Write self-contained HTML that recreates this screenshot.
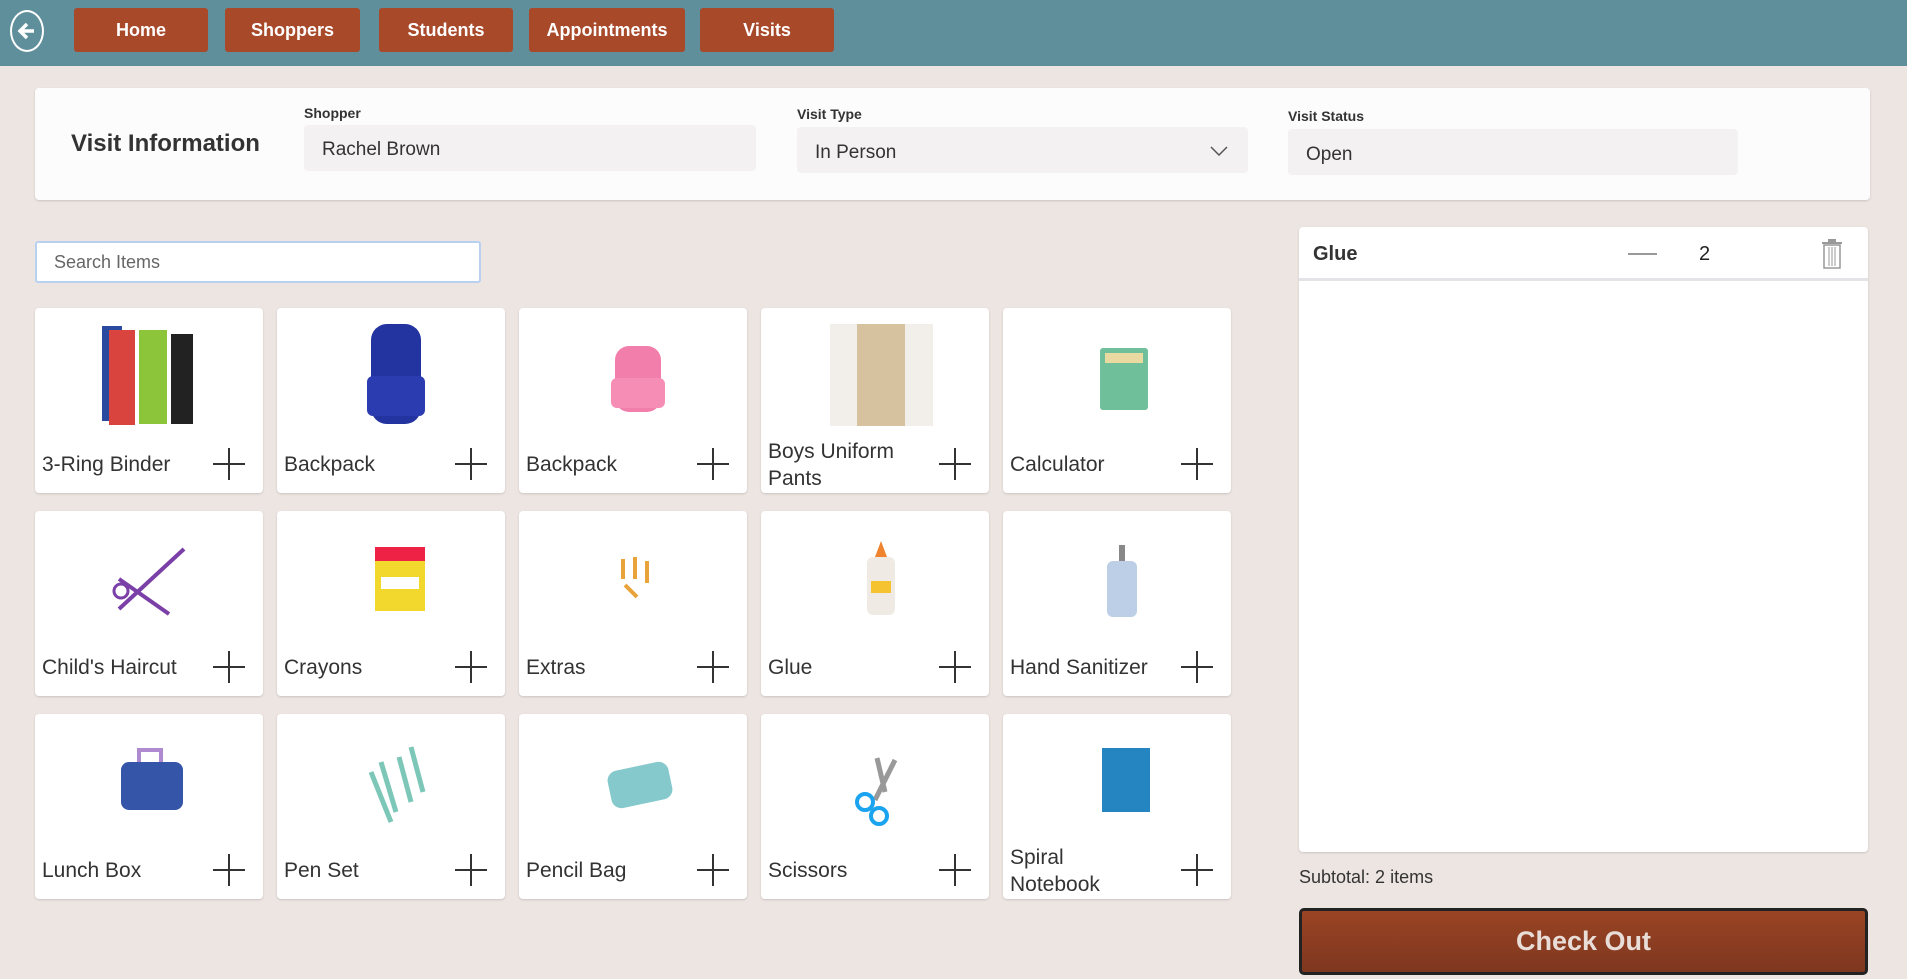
<!DOCTYPE html>
<html><head><meta charset="utf-8"><style>
*{box-sizing:border-box;margin:0;padding:0}
body{width:1907px;height:979px;overflow:hidden;background:#ede5e2;font-family:"Liberation Sans",sans-serif;color:#333;position:relative}
.top{position:absolute;left:0;top:0;width:1907px;height:66px;background:#5f8f9b}
.back{position:absolute;left:10px;top:10px;width:34px;height:42px;border:2px solid #fff;border-radius:50%}
.nav{position:absolute;top:8px;height:44px;background:#a8492a;color:#fff;font-weight:bold;font-size:18px;display:flex;align-items:center;justify-content:center;border-radius:3px}
.card0{position:absolute;left:35px;top:88px;width:1835px;height:112px;background:#fdfcfd;border-radius:4px;box-shadow:0 1px 2px rgba(0,0,0,.15)}
.lbl{position:absolute;font-size:14px;font-weight:bold;color:#333}
.inp{position:absolute;height:46px;background:#f3f1f2;border-radius:4px;font-size:19px;padding-left:18px;display:flex;align-items:center;color:#333}
.search{position:absolute;left:35px;top:241px;width:446px;height:42px;border:2px solid #b9d1f0;background:#fff;border-radius:3px;font-size:18px;color:#666;padding-left:17px;display:flex;align-items:center}
.it{position:absolute;width:228px;height:185px;background:#fff;border-radius:4px;box-shadow:0 1px 2px rgba(0,0,0,.15)}
.it .t{position:absolute;left:7px;top:0;height:185px;width:170px;display:flex;align-items:center;padding-top:128px;font-size:21px;color:#333;line-height:27px}
.it .p{position:absolute;left:178px;top:140px;width:32px;height:32px}
.it .p:before{content:"";position:absolute;left:15px;top:0;width:2px;height:32px;background:#333}
.it .p:after{content:"";position:absolute;left:0;top:15px;width:32px;height:2px;background:#333}
.it svg{position:absolute;left:64px;top:8px}
.panel{position:absolute;left:1299px;top:227px;width:569px;height:625px;background:#fff;border-radius:4px;box-shadow:0 1px 2px rgba(0,0,0,.15)}
.co{position:absolute;left:1299px;top:908px;width:569px;height:67px;background:linear-gradient(#9a4424,#7e371f);border:3px solid #222;border-radius:5px;color:#e9ddd8;font-size:27px;font-weight:bold;display:flex;align-items:center;justify-content:center}
</style></head><body>
<div class="top"></div>
<div class="back"><svg width="30" height="38" viewBox="0 0 30 38"><path d="M22 19H9M15 12L8 19L15 26" stroke="#fff" stroke-width="3.5" fill="none"/></svg></div>
<div class="nav" style="left:74px;width:134px">Home</div>
<div class="nav" style="left:225px;width:135px">Shoppers</div>
<div class="nav" style="left:379px;width:134px">Students</div>
<div class="nav" style="left:529px;width:156px">Appointments</div>
<div class="nav" style="left:700px;width:134px">Visits</div>

<div class="card0"></div>
<div style="position:absolute;left:71px;top:130px;font-size:24px;font-weight:bold;color:#333">Visit Information</div>
<div class="lbl" style="left:304px;top:105px">Shopper</div>
<div class="inp" style="left:304px;top:125px;width:452px;padding-top:4px">Rachel Brown</div>
<div class="lbl" style="left:797px;top:106px">Visit Type</div>
<div class="inp" style="left:797px;top:127px;width:451px;padding-top:6px">In Person<svg style="position:absolute;right:20px;top:19px" width="18" height="10"><path d="M1 1L9 9L17 1" stroke="#555" stroke-width="1.5" fill="none"/></svg></div>
<div class="lbl" style="left:1288px;top:108px">Visit Status</div>
<div class="inp" style="left:1288px;top:129px;width:450px;padding-top:6px">Open</div>

<div class="search">Search Items</div>

<!-- row1 -->
<div class="it" style="left:35px;top:308px"><svg width="100" height="110"><rect x="3" y="10" width="20" height="95" fill="#2a4aa0"/><rect x="10" y="14" width="26" height="95" fill="#d9443f"/><rect x="40" y="14" width="28" height="94" fill="#8cc43a"/><rect x="72" y="18" width="22" height="90" fill="#222"/></svg><div class="t">3-Ring Binder</div><div class="p"></div></div>
<div class="it" style="left:277px;top:308px"><svg width="100" height="110"><rect x="30" y="8" width="50" height="100" rx="16" fill="#23339f"/><rect x="26" y="60" width="58" height="40" rx="6" fill="#2a3cb0"/></svg><div class="t">Backpack</div><div class="p"></div></div>
<div class="it" style="left:519px;top:308px"><svg width="100" height="110"><rect x="32" y="30" width="46" height="66" rx="14" fill="#f27eab"/><rect x="28" y="62" width="54" height="30" rx="6" fill="#f58db5"/></svg><div class="t">Backpack</div><div class="p"></div></div>
<div class="it" style="left:761px;top:308px"><svg width="110" height="110" style="left:66px"><rect x="3" y="8" width="103" height="102" fill="#f2eeea"/><rect x="30" y="8" width="48" height="102" fill="#d7c2a0"/></svg><div class="t" style="padding-top:128px">Boys Uniform<br>Pants</div><div class="p"></div></div>
<div class="it" style="left:1003px;top:308px"><svg width="100" height="110"><rect x="33" y="32" width="48" height="62" rx="3" fill="#6fbf9a"/><rect x="38" y="37" width="38" height="10" fill="#ead9a0"/></svg><div class="t">Calculator</div><div class="p"></div></div>
<!-- row2 -->
<div class="it" style="left:35px;top:511px"><svg width="100" height="110"><path d="M20 90L85 30M20 60L70 95" stroke="#7b3fa8" stroke-width="4" fill="none"/><circle cx="22" cy="72" r="7" stroke="#7b3fa8" stroke-width="3" fill="none"/></svg><div class="t">Child's Haircut</div><div class="p"></div></div>
<div class="it" style="left:277px;top:511px"><svg width="100" height="110"><rect x="34" y="40" width="50" height="52" fill="#f2d72c"/><rect x="34" y="28" width="50" height="14" fill="#e24"/><rect x="40" y="58" width="38" height="12" fill="#fff"/></svg><div class="t">Crayons</div><div class="p"></div></div>
<div class="it" style="left:519px;top:511px"><svg width="100" height="110"><path d="M40 40v20M52 38v22M64 42v22M42 66l12 12" stroke="#e9a33a" stroke-width="4" fill="none"/></svg><div class="t">Extras</div><div class="p"></div></div>
<div class="it" style="left:761px;top:511px"><svg width="100" height="110"><rect x="42" y="38" width="28" height="58" rx="6" fill="#efebe4"/><path d="M50 38L56 22L62 38Z" fill="#f0832e"/><rect x="46" y="62" width="20" height="12" fill="#f4c32f"/></svg><div class="t">Glue</div><div class="p"></div></div>
<div class="it" style="left:1003px;top:511px"><svg width="100" height="110"><rect x="40" y="42" width="30" height="56" rx="6" fill="#bccfe6"/><rect x="52" y="26" width="6" height="16" fill="#888"/></svg><div class="t">Hand Sanitizer</div><div class="p"></div></div>
<!-- row3 -->
<div class="it" style="left:35px;top:714px"><svg width="100" height="110"><rect x="22" y="40" width="62" height="48" rx="8" fill="#3556a8"/><path d="M40 40V28h22v12" stroke="#b08ad0" stroke-width="4" fill="none"/></svg><div class="t">Lunch Box</div><div class="p"></div></div>
<div class="it" style="left:277px;top:714px"><svg width="100" height="110"><path d="M30 50L50 100M40 40L55 90M58 35L70 80M70 25L82 70" stroke="#7cc7b8" stroke-width="5" fill="none"/></svg><div class="t">Pen Set</div><div class="p"></div></div>
<div class="it" style="left:519px;top:714px"><svg width="100" height="110"><rect x="26" y="44" width="62" height="38" rx="10" fill="#86c9cc" transform="rotate(-12 57 63)"/></svg><div class="t">Pencil Bag</div><div class="p"></div></div>
<div class="it" style="left:761px;top:714px"><svg width="100" height="110"><path d="M70 38L50 78M52 36L60 70" stroke="#999" stroke-width="5" fill="none"/><circle cx="40" cy="80" r="8" stroke="#1aa3ee" stroke-width="4" fill="none"/><circle cx="54" cy="94" r="8" stroke="#1aa3ee" stroke-width="4" fill="none"/></svg><div class="t">Scissors</div><div class="p"></div></div>
<div class="it" style="left:1003px;top:714px"><svg width="100" height="110"><rect x="35" y="26" width="48" height="64" fill="#2585c0"/></svg><div class="t" style="padding-top:128px">Spiral<br>Notebook</div><div class="p"></div></div>

<div class="panel">
<div style="position:absolute;left:14px;top:16px;font-size:20px;font-weight:bold;color:#333">Glue</div>
<div style="position:absolute;left:329px;top:26px;width:29px;height:2px;background:#999"></div>
<div style="position:absolute;left:400px;top:16px;font-size:20px;color:#222">2</div>
<svg style="position:absolute;left:521px;top:11px" width="24" height="32"><rect x="2" y="4" width="20" height="2" fill="#999"/><rect x="8" y="1" width="8" height="3" fill="#999"/><rect x="4" y="7" width="16" height="23" fill="none" stroke="#999" stroke-width="1.5"/><path d="M9 9v19M12 9v19M15 9v19" stroke="#999"/></svg>
<div style="position:absolute;left:0;top:51px;width:569px;height:3px;background:#e4e4e8"></div>
</div>
<div style="position:absolute;left:1299px;top:867px;font-size:18px;color:#333">Subtotal: 2 items</div>
<div class="co">Check Out</div>
</body></html>
